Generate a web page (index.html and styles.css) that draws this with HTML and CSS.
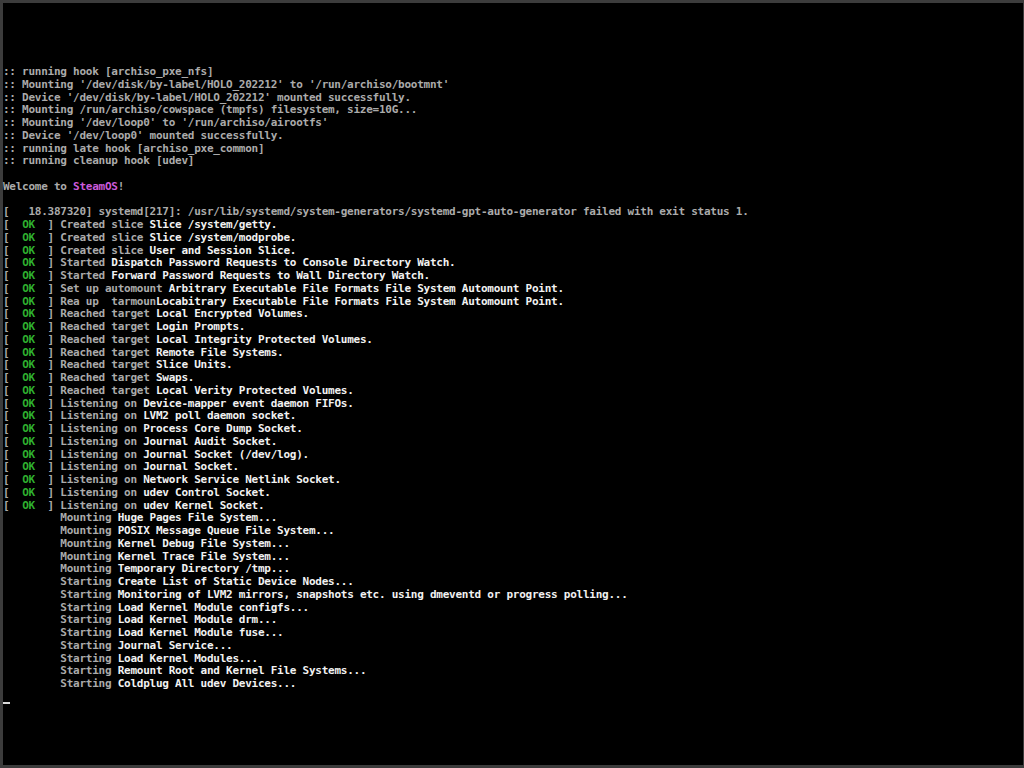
FILE: index.html
```html
<!DOCTYPE html>
<html lang="en">
<head>
<meta charset="utf-8">
<title>SteamOS boot console</title>
<link rel="stylesheet" href="styles.css">
</head>
<body>
<div class="screen">
<div class="console">
<div class="ln">:: running hook [archiso_pxe_nfs]</div>
<div class="ln">:: Mounting '/dev/disk/by-label/HOLO_202212' to '/run/archiso/bootmnt'</div>
<div class="ln">:: Device '/dev/disk/by-label/HOLO_202212' mounted successfully.</div>
<div class="ln">:: Mounting /run/archiso/cowspace (tmpfs) filesystem, size=10G...</div>
<div class="ln">:: Mounting '/dev/loop0' to '/run/archiso/airootfs'</div>
<div class="ln">:: Device '/dev/loop0' mounted successfully.</div>
<div class="ln">:: running late hook [archiso_pxe_common]</div>
<div class="ln">:: running cleanup hook [udev]</div>
<div class="ln"> </div>
<div class="ln">Welcome to <span class="m">SteamOS</span>!</div>
<div class="ln"> </div>
<div class="ln">[   18.387320] systemd[217]: /usr/lib/systemd/system-generators/systemd-gpt-auto-generator failed with exit status 1.</div>
<div class="ln">[  <span class="ok">OK</span>  ] Created slice <span class="w">Slice /system/getty.</span></div>
<div class="ln">[  <span class="ok">OK</span>  ] Created slice <span class="w">Slice /system/modprobe.</span></div>
<div class="ln">[  <span class="ok">OK</span>  ] Created slice <span class="w">User and Session Slice.</span></div>
<div class="ln">[  <span class="ok">OK</span>  ] Started <span class="w">Dispatch Password Requests to Console Directory Watch.</span></div>
<div class="ln">[  <span class="ok">OK</span>  ] Started <span class="w">Forward Password Requests to Wall Directory Watch.</span></div>
<div class="ln">[  <span class="ok">OK</span>  ] Set up automount <span class="w">Arbitrary Executable File Formats File System Automount Point.</span></div>
<div class="ln">[  <span class="ok">OK</span>  ] Rea up  tarmoun<span class="w">Locabitrary Executable File Formats File System Automount Point.</span></div>
<div class="ln">[  <span class="ok">OK</span>  ] Reached target <span class="w">Local Encrypted Volumes.</span></div>
<div class="ln">[  <span class="ok">OK</span>  ] Reached target <span class="w">Login Prompts.</span></div>
<div class="ln">[  <span class="ok">OK</span>  ] Reached target <span class="w">Local Integrity Protected Volumes.</span></div>
<div class="ln">[  <span class="ok">OK</span>  ] Reached target <span class="w">Remote File Systems.</span></div>
<div class="ln">[  <span class="ok">OK</span>  ] Reached target <span class="w">Slice Units.</span></div>
<div class="ln">[  <span class="ok">OK</span>  ] Reached target <span class="w">Swaps.</span></div>
<div class="ln">[  <span class="ok">OK</span>  ] Reached target <span class="w">Local Verity Protected Volumes.</span></div>
<div class="ln">[  <span class="ok">OK</span>  ] Listening on <span class="w">Device-mapper event daemon FIFOs.</span></div>
<div class="ln">[  <span class="ok">OK</span>  ] Listening on <span class="w">LVM2 poll daemon socket.</span></div>
<div class="ln">[  <span class="ok">OK</span>  ] Listening on <span class="w">Process Core Dump Socket.</span></div>
<div class="ln">[  <span class="ok">OK</span>  ] Listening on <span class="w">Journal Audit Socket.</span></div>
<div class="ln">[  <span class="ok">OK</span>  ] Listening on <span class="w">Journal Socket (/dev/log).</span></div>
<div class="ln">[  <span class="ok">OK</span>  ] Listening on <span class="w">Journal Socket.</span></div>
<div class="ln">[  <span class="ok">OK</span>  ] Listening on <span class="w">Network Service Netlink Socket.</span></div>
<div class="ln">[  <span class="ok">OK</span>  ] Listening on <span class="w">udev Control Socket.</span></div>
<div class="ln">[  <span class="ok">OK</span>  ] Listening on <span class="w">udev Kernel Socket.</span></div>
<div class="ln">         Mounting <span class="w">Huge Pages File System...</span></div>
<div class="ln">         Mounting <span class="w">POSIX Message Queue File System...</span></div>
<div class="ln">         Mounting <span class="w">Kernel Debug File System...</span></div>
<div class="ln">         Mounting <span class="w">Kernel Trace File System...</span></div>
<div class="ln">         Mounting <span class="w">Temporary Directory /tmp...</span></div>
<div class="ln">         Starting <span class="w">Create List of Static Device Nodes...</span></div>
<div class="ln">         Starting <span class="w">Monitoring of LVM2 mirrors, snapshots etc. using dmeventd or progress polling...</span></div>
<div class="ln">         Starting <span class="w">Load Kernel Module configfs...</span></div>
<div class="ln">         Starting <span class="w">Load Kernel Module drm...</span></div>
<div class="ln">         Starting <span class="w">Load Kernel Module fuse...</span></div>
<div class="ln">         Starting <span class="w">Journal Service...</span></div>
<div class="ln">         Starting <span class="w">Load Kernel Modules...</span></div>
<div class="ln">         Starting <span class="w">Remount Root and Kernel File Systems...</span></div>
<div class="ln">         Starting <span class="w">Coldplug All udev Devices...</span></div>
<div class="ln"><span class="cursor"></span></div>
</div>
</div>
</body>
</html>
```

FILE: styles.css
```css
html, body {
  margin: 0;
  padding: 0;
}

body {
  width: 1024px;
  height: 768px;
  overflow: hidden;
  background: #3c3c3c;
  padding: 3px 1px 3px 3px;
  box-sizing: border-box;
}

.screen {
  height: 100%;
  background: #000;
  box-sizing: border-box;
  padding-top: 63px;
}

.console {
  font-family: "DejaVu Sans Mono", "Liberation Mono", monospace;
  font-weight: bold;
  font-size: 11px;
  letter-spacing: -0.25px;
  color: #ababab;
}

.ln {
  height: 12.75px;
  line-height: 12.75px;
  white-space: pre;
}

.w {
  color: #f2f2f2;
}

.ok {
  color: #2fb02f;
}

.m {
  color: #cc5bdc;
}

.cursor {
  display: inline-block;
  width: 7px;
  height: 13px;
  border-bottom: 2px solid #d8d8d8;
  box-sizing: border-box;
  vertical-align: top;
}
```
